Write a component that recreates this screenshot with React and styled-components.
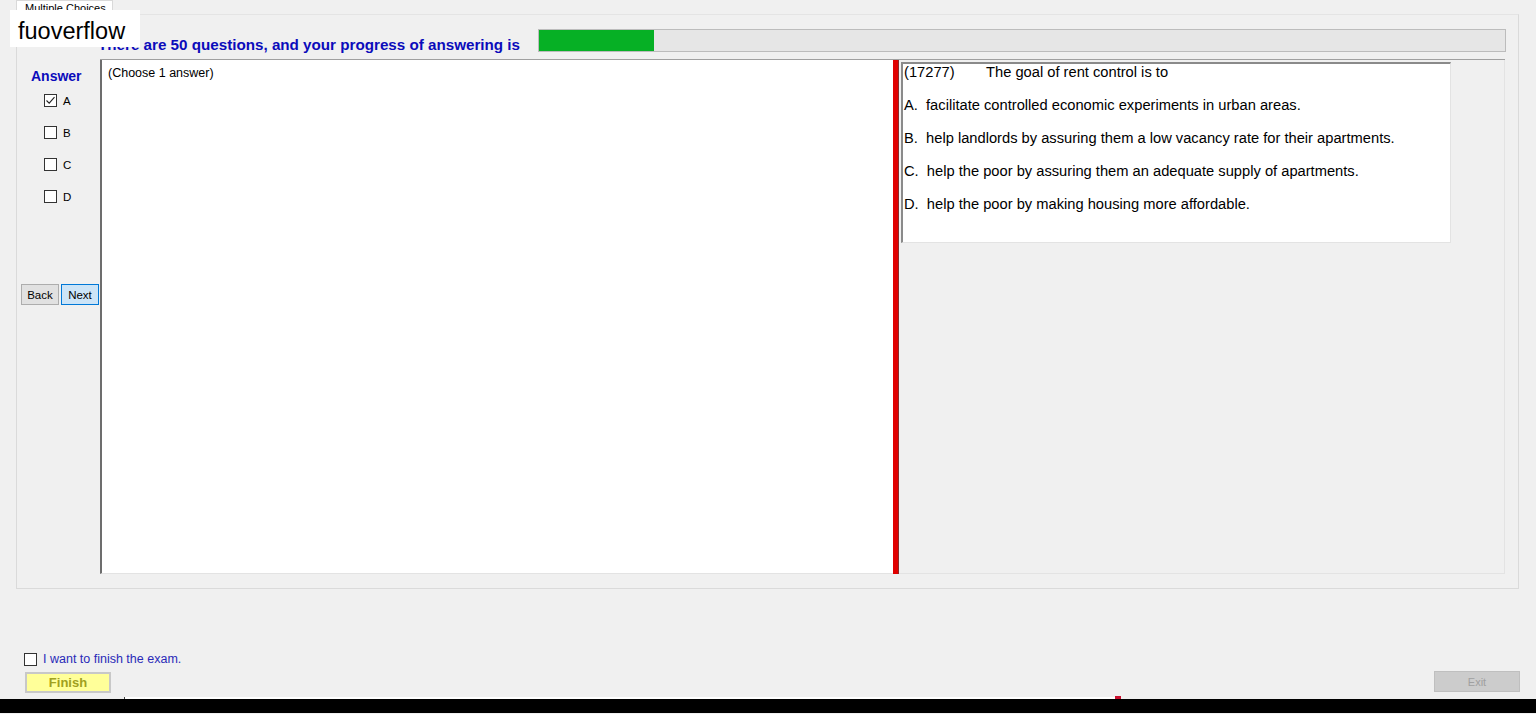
import React from 'react'
import styled, { createGlobalStyle } from 'styled-components'

const GlobalStyle = createGlobalStyle`
  html, body {
    margin: 0;
    padding: 0;
    background: #f0f0f0;
    font-family: "Liberation Sans", Arial, sans-serif;
    overflow: hidden;
  }
`

const Page = styled.div`
  position: relative;
  height: 714px;
  display: flex;
  flex-direction: column;
  background: #f0f0f0;
`

const Watermark = styled.div`
  position: absolute;
  left: 10px;
  top: 10px;
  width: 130px;
  height: 37px;
  background: #fff;
  color: #000;
  font-size: 23.5px;
  line-height: 30px;
  padding: 6px 0 0 8px;
  box-sizing: border-box;
  z-index: 5;
`

const TabStrip = styled.div`
  height: 14px;
  padding-left: 16px;
  display: flex;
`

const Tab = styled.div`
  height: 15px;
  padding: 0 6px 0 8px;
  background: #fff;
  border: 1px solid #d9d9d9;
  border-bottom: none;
  font-size: 11px;
  line-height: 14px;
  color: #000;
  overflow: hidden;
  z-index: 1;
`

const TabPage = styled.div`
  margin: 0 17px 0 16px;
  height: 575px;
  box-sizing: border-box;
  border: 1px solid #dadada;
  border-top-color: #e4e4e4;
  display: flex;
  flex-direction: column;
`

const HeaderRow = styled.div`
  height: 44px;
  display: flex;
  align-items: flex-start;
  padding-top: 14px;
  box-sizing: border-box;
`

const Headline = styled.div`
  margin-left: 81px;
  width: 440px;
  padding-top: 7px;
  color: #0b0bbb;
  font-weight: bold;
  font-size: 15.2px;
  line-height: 17px;
  white-space: nowrap;
`

const Progress = styled.div`
  width: 968px;
  height: 23px;
  box-sizing: border-box;
  border: 1px solid #bcbcbc;
  background: #e6e6e6;
`

const ProgressFill = styled.div`
  height: 100%;
  background: #06b025;
`

const Body = styled.div`
  flex: 1;
  display: flex;
  padding-bottom: 14px;
`

const Sidebar = styled.div`
  width: 83px;
  display: flex;
  flex-direction: column;
  align-items: flex-start;
`

const AnswerTitle = styled.div`
  margin: 9px 0 0 14px;
  color: #0b0bbb;
  font-weight: bold;
  font-size: 14px;
  line-height: 16px;
`

const Choices = styled.div`
  margin: 10px 0 0 27px;
  display: flex;
  flex-direction: column;
  gap: 19px;
`

const ChoiceRow = styled.label`
  display: flex;
  align-items: center;
  gap: 6px;
  height: 13px;
  font-size: 11.5px;
  color: #000;
`

const Box = styled.span`
  width: 13px;
  height: 13px;
  box-sizing: border-box;
  border: 1px solid #333;
  background: #fff;
  display: flex;
  align-items: center;
  justify-content: center;
`

const NavRow = styled.div`
  margin: 81px 0 0 4px;
  display: flex;
  gap: 2px;
`

const NavButton = styled.button`
  width: 38px;
  height: 21px;
  padding: 0;
  box-sizing: border-box;
  font-family: inherit;
  font-size: 11.5px;
  color: #000;
  background: ${p => (p.$focused ? '#cce4f7' : '#e1e1e1')};
  border: 1px solid ${p => (p.$focused ? '#0078d7' : '#adadad')};
`

const Split = styled.div`
  width: 1405px;
  display: flex;
  border-top: 1px solid #a0a0a0;
`

const AnswerBox = styled.div`
  width: 793px;
  box-sizing: border-box;
  background: #fff;
  border-left: 2px solid #6d6d6d;
  border-bottom: 1px solid #e3e3e3;
  padding: 6px 0 0 6px;
  font-size: 12.5px;
  color: #000;
`

const Splitter = styled.div`
  width: 6px;
  background: #e00000;
  border-right: 1px solid #8a2a2a;
  box-sizing: border-box;
`

const QuestionPane = styled.div`
  flex: 1;
  padding: 2px 0 0 2px;
  border-right: 1px solid #e3e3e3;
  border-bottom: 1px solid #e3e3e3;
  box-sizing: border-box;
`

const QuestionBox = styled.div`
  width: 550px;
  height: 181px;
  box-sizing: border-box;
  background: #fff;
  border-top: 2px solid #8a8a8a;
  border-left: 2px solid #8a8a8a;
  border-right: 1px solid #e3e3e3;
  border-bottom: 1px solid #e3e3e3;
  padding: 0 0 0 1px;
  font-size: 14.7px;
  color: #000;
`

const Line = styled.div`
  height: 33px;
  line-height: 17px;
  white-space: pre;
`

const QNumber = styled.span`
  display: inline-block;
  width: 82px;
`

const Footer = styled.div`
  height: 107px;
  position: relative;
  padding: 63px 0 0 24px;
  box-sizing: border-box;
`

const FinishCheck = styled.label`
  display: flex;
  align-items: center;
  gap: 6px;
  font-size: 12.5px;
  color: #2a2ab8;
`

const FinishButton = styled.button`
  margin: 6px 0 0 1px;
  width: 86px;
  height: 21px;
  padding: 0;
  box-sizing: border-box;
  background: #ffff99;
  border: 2px solid #c8c8c8;
  color: #a0a020;
  font-family: inherit;
  font-weight: bold;
  font-size: 13px;
`

const ExitButton = styled.button`
  position: absolute;
  right: 16px;
  top: 82px;
  width: 86px;
  height: 21px;
  padding: 0;
  box-sizing: border-box;
  background: #cccccc;
  border: 1px solid #bfbfbf;
  color: #a0a0a0;
  font-family: inherit;
  font-size: 11px;
`

const ScrollHint = styled.div`
  height: 3px;
  display: flex;
  align-items: flex-end;
  padding-left: 124px;
`

const HintLine = styled.div`
  width: 990px;
  height: 2px;
  background: #fff;
  border-left: 1px solid #444;
`

const HintMark = styled.div`
  width: 6px;
  height: 3px;
  background: #c8102e;
`

const Taskbar = styled.div`
  height: 14px;
  background: #000;
`

const Check = () => (
  <svg width="11" height="11" viewBox="0 0 11 11">
    <path d="M1.5 5.5 L4.2 8.2 L9.5 2.2" fill="none" stroke="#222" strokeWidth="1.1" />
  </svg>
)

const choices = [
  { key: 'A', checked: true },
  { key: 'B', checked: false },
  { key: 'C', checked: false },
  { key: 'D', checked: false },
]

const options = [
  'A.  facilitate controlled economic experiments in urban areas.',
  'B.  help landlords by assuring them a low vacancy rate for their apartments.',
  'C.  help the poor by assuring them an adequate supply of apartments.',
  'D.  help the poor by making housing more affordable.',
]

export default function App() {
  const progress = 115 / 966

  return (
    <Page>
      <GlobalStyle />
      <Watermark>fuoverflow</Watermark>

      <TabStrip>
        <Tab>Multiple Choices</Tab>
      </TabStrip>

      <TabPage>
        <HeaderRow>
          <Headline>There are 50 questions, and your progress of answering is</Headline>
          <Progress>
            <ProgressFill style={{ width: `${progress * 100}%` }} />
          </Progress>
        </HeaderRow>

        <Body>
          <Sidebar>
            <AnswerTitle>Answer</AnswerTitle>
            <Choices>
              {choices.map(c => (
                <ChoiceRow key={c.key}>
                  <Box>{c.checked && <Check />}</Box>
                  {c.key}
                </ChoiceRow>
              ))}
            </Choices>
            <NavRow>
              <NavButton>Back</NavButton>
              <NavButton $focused>Next</NavButton>
            </NavRow>
          </Sidebar>

          <Split>
            <AnswerBox>(Choose 1 answer)</AnswerBox>
            <Splitter />
            <QuestionPane>
              <QuestionBox>
                <Line>
                  <QNumber>(17277)</QNumber>The goal of rent control is to
                </Line>
                {options.map(o => (
                  <Line key={o}>{o}</Line>
                ))}
              </QuestionBox>
            </QuestionPane>
          </Split>
        </Body>
      </TabPage>

      <Footer>
        <FinishCheck>
          <Box />
          I want to finish the exam.
        </FinishCheck>
        <FinishButton>Finish</FinishButton>
        <ExitButton>Exit</ExitButton>
      </Footer>

      <ScrollHint>
        <HintLine />
        <HintMark />
      </ScrollHint>
      <Taskbar />
    </Page>
  )
}
